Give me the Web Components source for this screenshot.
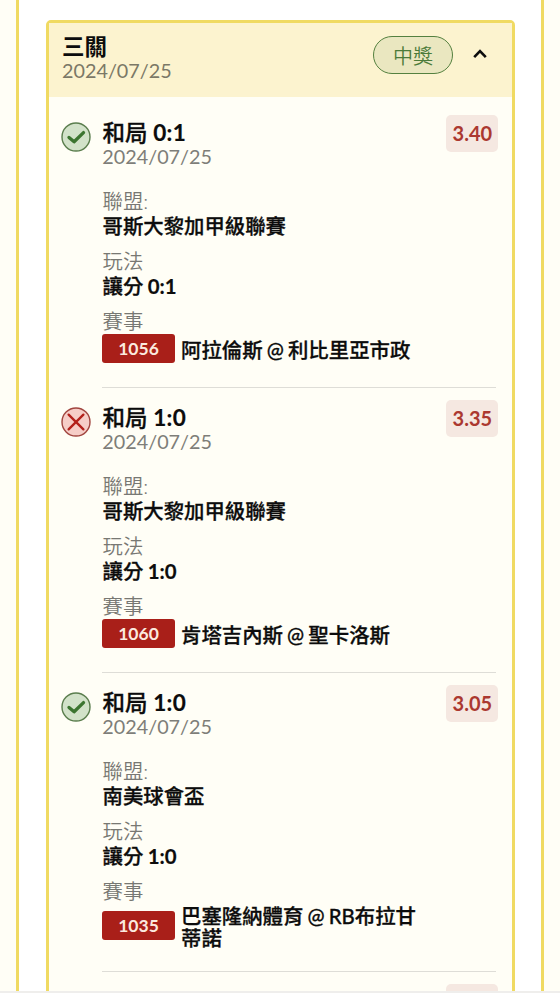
<!DOCTYPE html>
<html lang="zh-Hant">
<head>
<meta charset="utf-8">
<title>三關</title>
<style>
  body {
    margin: 0;
    height: 1000px;
    overflow: hidden;
    background: #fff;
    font-family: Lato, "Noto Sans CJK TC", sans-serif;
    color: #0c0c0c;
  }
</style>
</head>
<body>
<bet-page>
  <bet-card name="三關" date="2024/07/25" status="中獎">
    <bet-leg result="win" pick="和局 0:1" date="2024/07/25" odds="3.40" league="哥斯大黎加甲級聯賽" market="讓分 0:1" code="1056">阿拉倫斯 @ 利比里亞市政</bet-leg>
    <bet-leg result="lose" pick="和局 1:0" date="2024/07/25" odds="3.35" league="哥斯大黎加甲級聯賽" market="讓分 1:0" code="1060">肯塔吉內斯 @ 聖卡洛斯</bet-leg>
    <bet-leg result="win" pick="和局 1:0" date="2024/07/25" odds="3.05" league="南美球會盃" market="讓分 1:0" code="1035">巴塞隆納體育 @ RB布拉甘蒂諾</bet-leg>
    <bet-leg></bet-leg>
  </bet-card>
</bet-page>

<script>
class BetPage extends HTMLElement {
  constructor() {
    super();
    this.attachShadow({ mode: "open" });
    this.shadowRoot.innerHTML = `
      <style>
        :host {
          display: block;
          box-sizing: border-box;
          height: 993px;
          overflow: hidden;
          padding: 0 16px;
          background: #fffef6;
          border-bottom: 2px solid #efeeec;
        }
        .panel {
          box-sizing: border-box;
          height: 991px;
          padding: 20px 26.5px 0 27px;
          background: #fff;
          border: solid #f0da62;
          border-width: 0 3px;
        }
      </style>
      <div class="panel"><slot></slot></div>
    `;
  }
}

class BetCard extends HTMLElement {
  constructor() {
    super();
    this.attachShadow({ mode: "open" });
    this.shadowRoot.innerHTML = `
      <style>
        :host {
          display: block;
          box-sizing: border-box;
          height: 1300px;
          border: 3px solid #f0da62;
          border-radius: 5px;
          background: #fffef6;
        }
        header {
          display: flex;
          box-sizing: border-box;
          height: 74px;
          padding: 12px 24px 0 13px;
          background: #fcf3cf;
        }
        .title {
          flex: 1;
        }
        .name {
          height: 24px;
          font-size: 22.5px;
          line-height: 24px;
          font-weight: 600;
        }
        .date {
          height: 24px;
          font-size: 19.8px;
          line-height: 23px;
          color: #7b7867;
        }
        .status {
          box-sizing: border-box;
          width: 80px;
          height: 38px;
          padding-top: 1px;
          margin: 1px 18.5px 0 0;
          border: 1.5px solid #54803f;
          border-radius: 19px;
          background: #eae7c0;
          color: #4b7b39;
          font-size: 20px;
          line-height: 36px;
          font-weight: 350;
          text-align: center;
        }
        .arrow {
          width: 16px;
          height: 12px;
          margin-top: 13px;
        }
        .legs {
          padding: 6px 13px 0 13px;
        }
      </style>
      <header>
        <div class="title">
          <div class="name"></div>
          <div class="date"></div>
        </div>
        <div class="status"></div>
        <svg class="arrow" viewBox="0 0 16 12" fill="none">
          <path d="M2.2 9.2L8 3.2l5.8 6" stroke="#0c0c0c" stroke-width="2.6"/>
        </svg>
      </header>
      <div class="legs"><slot></slot></div>
    `;
  }

  connectedCallback() {
    ["name", "date", "status"].forEach(key => {
      this.shadowRoot.querySelector("." + key).textContent = this.getAttribute(key);
    });
  }
}

const ICONS = {
  win: `
    <circle cx="15" cy="15" r="14" fill="#d2e2c9" stroke="#5a7d4d" stroke-width="1.4"/>
    <path d="M8 15.4l5.1 4.4 9.4-9.2" stroke="#3c7530" stroke-width="3.3" stroke-linecap="round" stroke-linejoin="round"/>`,
  lose: `
    <circle cx="15" cy="15" r="14" fill="#f6cdc7" stroke="#a1453f" stroke-width="1.4"/>
    <path d="M7.6 7.6l14.8 14.8M22.4 7.6L7.6 22.4" stroke="#b3211b" stroke-width="2.3" stroke-linecap="round"/>`
};

class BetLeg extends HTMLElement {
  constructor() {
    super();
    this.attachShadow({ mode: "open" });
    this.shadowRoot.innerHTML = `
      <style>
        :host {
          display: flex;
          box-sizing: border-box;
        }
        .icon {
          width: 30px;
          height: 30px;
          margin: 19px 11px 0 -1px;
          flex: none;
        }
        .body {
          flex: 1;
          margin-right: 2.5px;
          padding: 18px 0 23px;
          border-bottom: 1px solid #deddd7;
        }
        .top {
          display: flex;
          justify-content: space-between;
          height: 48px;
          margin-bottom: 20px;
        }
        .pick, .value, .teams {
          font-weight: 500;
          -webkit-text-stroke: 0.3px #0c0c0c;
        }
        .pick b, .value b {
          -webkit-text-stroke: 0.2px #0c0c0c;
        }
        .pick {
          height: 24px;
          padding-left: 0.5px;
          font-size: 22.5px;
          line-height: 23px;
        }
        .pick b {
          letter-spacing: 0.3px;
        }
        .date {
          height: 24px;
          padding-left: 0.3px;
          font-size: 19.8px;
          line-height: 23px;
          color: #7e7e79;
        }
        .odds {
          width: 52px;
          height: 37px;
          margin: -6px -2.4px 0 0;
          border-radius: 5px;
          background: #f5e8e1;
          color: #ab3830;
          font-size: 20px;
          line-height: 37px;
          font-weight: 700;
          text-align: center;
        }
        .label {
          height: 24px;
          padding-left: 0.5px;
          font-size: 20.4px;
          line-height: 24px;
          font-weight: 350;
          color: #787873;
        }
        .value {
          height: 26px;
          margin-bottom: 10px;
          padding-left: 0.5px;
          font-size: 20.4px;
          line-height: 26px;
          word-spacing: -0.7px;
        }
        .match {
          display: flex;
          align-items: center;
          min-height: 31px;
        }
        .code {
          flex: none;
          width: 73px;
          height: 29px;
          margin-right: 6px;
          border-radius: 3px;
          background: #a91f19;
          color: #fbe9df;
          font-size: 17.5px;
          line-height: 30px;
          font-weight: 700;
          text-align: center;
        }
        .teams {
          max-width: 240px;
          padding-top: 1.5px;
          margin-bottom: -0.5px;
          font-size: 20.4px;
          line-height: 22px;
          word-spacing: -1px;
        }
      </style>
      <svg class="icon" viewBox="0 0 30 30" fill="none"></svg>
      <div class="body">
        <div class="top">
          <div>
            <div class="pick"></div>
            <div class="date"></div>
          </div>
          <div class="odds"></div>
        </div>
        <div class="label">聯盟:</div>
        <div class="value league"></div>
        <div class="label">玩法</div>
        <div class="value market"></div>
        <div class="label">賽事</div>
        <div class="match">
          <div class="code"></div>
          <div class="teams"><slot></slot></div>
        </div>
      </div>
    `;
  }

  connectedCallback() {
    const result = this.getAttribute("result");
    // a leg without a result only shows its empty odds box
    if (!result) {
      this.shadowRoot.querySelectorAll(".label, .match").forEach(el => el.remove());
      return;
    }
    this.shadowRoot.querySelector(".icon").innerHTML = ICONS[result];
    ["date", "odds", "league", "code"].forEach(key => {
      this.shadowRoot.querySelector("." + key).textContent = this.getAttribute(key);
    });
    // scores are set heavier than the characters in front of them
    ["pick", "market"].forEach(key => {
      const [name, score] = this.getAttribute(key).split(" ");
      this.shadowRoot.querySelector("." + key).innerHTML = `${name} <b>${score}</b>`;
    });
  }
}

customElements.define("bet-page", BetPage);
customElements.define("bet-card", BetCard);
customElements.define("bet-leg", BetLeg);
</script>
</body>
</html>
